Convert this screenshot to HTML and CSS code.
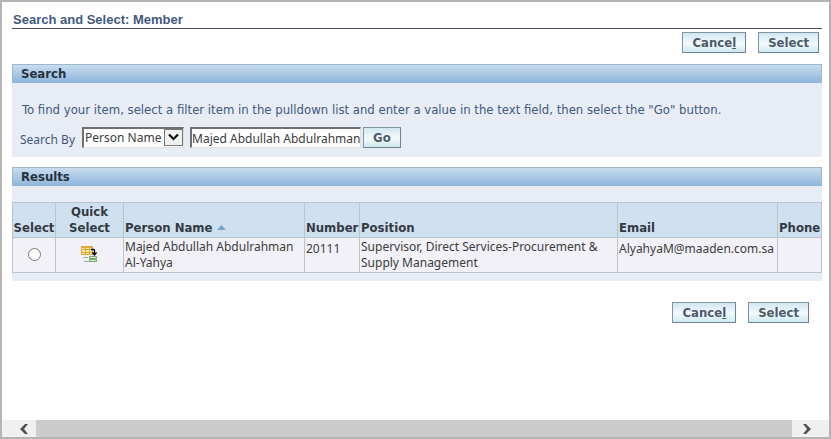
FILE: index.html
```html
<!DOCTYPE html>
<html lang="en">
<head>
<meta charset="utf-8">
<title>Search and Select: Member</title>
<link rel="stylesheet" href="styles.css">
</head>
<body>
<main class="content">
  <h1 class="page-title">Search and Select: Member</h1>
  <div class="actions">
    <button class="btn" type="button">Cance<u>l</u></button>
    <button class="btn" type="button">Select</button>
  </div>
  <section class="panel">
    <h2 class="panel-title">Search</h2>
    <form class="search">
      <p class="hint">To find your item, select a filter item in the pulldown list and enter a value in the text field, then select the "Go" button.</p>
      <div class="search-row">
        <label for="search-by">Search By</label>
        <div class="select-box">
          <select id="search-by"><option>Person Name</option></select>
          <svg class="select-arrow" viewBox="0 0 19 17" aria-hidden="true"><rect x=".5" y=".5" width="18" height="16" fill="#f0f0f0" stroke="#777"/><path d="M5 5.500l4.500 4.500 4.500-4.500" fill="none" stroke="#111" stroke-width="2.2"/></svg>
        </div>
        <input class="search-text" type="text" aria-label="Search text" value="Majed Abdullah Abdulrahman Al-Yahya">
        <button class="btn btn-go" type="button">Go</button>
      </div>
    </form>
  </section>
  <section class="panel results">
    <h2 class="panel-title">Results</h2>
    <table>
      <colgroup><col class="c-select"><col class="c-quick"><col class="c-name"><col class="c-number"><col class="c-position"><col class="c-email"><col class="c-phone"></colgroup>
      <thead>
        <tr>
          <th class="center">Select</th>
          <th class="center light">Quick Select</th>
          <th>Person Name <svg class="sort" viewBox="0 0 9 5" aria-hidden="true"><path d="M0 5L4.500 0 9 5z" fill="#7ba4c4"/></svg></th>
          <th>Number</th>
          <th>Position</th>
          <th>Email</th>
          <th>Phone</th>
        </tr>
      </thead>
      <tbody>
        <tr>
          <td class="center"><input class="radio" type="radio" name="member" aria-label="Select Majed Abdullah Abdulrahman Al-Yahya"></td>
          <td class="center"><button class="quick" type="button" aria-label="Quick Select"><svg viewBox="0 0 17 17" aria-hidden="true">
            <rect x="0" y="0" width="12" height="9" fill="#dfa93c"/>
            <path d="M1 2h3v1H1zM5 2h3v1H5zM9 2h2v1H9zM1 4h3v2H1zM5 4h3v2H5zM9 4h2v2H9zM1 7h3v1H1zM5 7h3v1H5zM9 7h2v1H9z" fill="#ffe9a0"/>
            <path d="M2 11.500h5M3 15.500h5" stroke="#9aaf96"/>
            <path d="M8.500 10.500h7v2h-7zM8.500 13.500h7v2h-7z" fill="#d8efd0" stroke="#78a36d"/>
            <path d="M10 3.500h2.500q1 0 1 1V7" fill="none" stroke="#000" stroke-width="1.300"/><path d="M10.500 6.500h6l-3 3.500z" fill="#000"/>
          </svg></button></td>
          <td>Majed Abdullah Abdulrahman <span class="nowrap">Al-Yahya</span></td>
          <td class="top">20111</td>
          <td>Supervisor, Direct Services-Procurement &amp; Supply Management</td>
          <td class="top">AlyahyaM@maaden.com.sa</td>
          <td></td>
        </tr>
      </tbody>
    </table>
  </section>
  <div class="actions actions-bottom">
    <button class="btn" type="button">Cance<u>l</u></button>
    <button class="btn" type="button">Select</button>
  </div>
</main>
<div class="scrollbar">
  <button class="scroll-btn" type="button" aria-label="Scroll left"><svg viewBox="0 0 10 12" aria-hidden="true"><path d="M6 1h3L5 6l4 5H6L1 6z" fill="#505050"/></svg></button>
  <div class="thumb"></div>
  <button class="scroll-btn" type="button" aria-label="Scroll right"><svg viewBox="0 0 10 12" aria-hidden="true"><path d="M4 1H1l4 5-4 5h3l5-5z" fill="#505050"/></svg></button>
</div>
</body>
</html>
```
FILE: styles.css
```css
* {
  box-sizing: border-box;
}

body {
  display: flex;
  flex-direction: column;
  min-height: 100vh;
  margin: 0;
  border: 2px solid #b4b4b4;
  background: #fff;
  color: #3c3c3c;
  font: 12px/16px "Noto Sans", sans-serif;
}

button,
input,
select {
  margin: 0;
  color: inherit;
  font: inherit;
}

.content {
  flex: 1;
  padding: 10px 7px 0 10px;
}

.page-title {
  margin: 0;
  padding-left: 1px;
  border-bottom: 1px solid #4a4a6c;
  color: #425a80;
  font: bold 13px/16px "Liberation Sans", Arial, sans-serif;
}

.actions {
  display: flex;
  justify-content: flex-end;
  gap: 12px;
  padding: 3px 3px 11px 0;
}

.actions-bottom {
  padding: 11px 13px 11px 0;
}

.hint,
.btn,
.panel-title,
th {
  font-family: "DejaVu Sans Condensed", "DejaVu Sans", sans-serif;
  font-size: 13px;
}

.btn {
  height: 21px;
  padding: 0 9px;
  border: 1px solid #8295a3;
  border-right-color: #6f8291;
  border-bottom-color: #6f8291;
  background: linear-gradient(#d2e6f0, #f2fafc 55%, #cde9ef);
  color: #4d5a6b;
  font-weight: bold;
  line-height: 18px;
}

.panel {
  margin-bottom: 10px;
  background: #e8edf5;
}

.panel-title {
  margin: 0;
  padding: 0 8px;
  border: 1px solid #9bb7cf;
  border-bottom: 0;
  background: linear-gradient(#c8dcee, #8db5dc);
  color: #26323f;
  line-height: 18px;
}

.search {
  padding: 19px 8px 9px;
  color: #40587e;
}

.hint {
  margin: 0 0 9px;
  padding-left: 2px;
}

.search-row {
  display: flex;
  align-items: center;
}

.search-row label {
  padding-top: 4px;
  margin-right: 7px;
}

.select-box {
  position: relative;
  margin-right: 6px;
}

.select-box select,
.search-text {
  height: 21px;
  padding: 0;
  border: 2px solid #707070;
  border-right: 1px solid #e0e0e0;
  border-bottom: 1px solid #e0e0e0;
  border-radius: 0;
  background: #fff;
  color: #3c3c3c;
}

.select-box select {
  display: block;
  width: 102px;
  padding: 0 1px;
  appearance: none;
}

.select-arrow {
  position: absolute;
  top: 2px;
  right: 1px;
  width: 19px;
  height: 17px;
  pointer-events: none;
}

.search-text {
  width: 171px;
  margin-right: 2px;
}

.results {
  padding-bottom: 8px;
}

table {
  width: 100%;
  margin-top: 16px;
  border-collapse: collapse;
  table-layout: fixed;
}

.c-select { width: 43px; }
.c-quick { width: 68px; }
.c-name { width: 181px; }
.c-number { width: 55px; }
.c-email { width: 160px; }
.c-phone { width: 44px; }

th,
td {
  padding: 1px;
  border: 1px solid #bcc3cb;
  text-align: left;
}

th {
  border-left-color: #8d9dac;
  background: #cfe0f0;
  color: #333a42;
  vertical-align: bottom;
}

th.light,
th:first-child {
  border-left-color: #b3c7d8;
}

td {
  height: 35px;
  background: #f1f1f7;
  vertical-align: middle;
}

th.center,
td.center {
  text-align: center;
}

th:first-child {
  padding: 1px 0;
}

th.light {
  padding: 1px 8px;
}

td.center {
  padding-bottom: 3px;
}

td.top {
  padding-top: 3px;
  vertical-align: top;
}

.nowrap {
  white-space: nowrap;
}

.sort {
  width: 9px;
  height: 5px;
  vertical-align: 2px;
}

.radio {
  width: 13px;
  height: 13px;
  vertical-align: middle;
}

.quick {
  padding: 0;
  border: 0;
  background: none;
  vertical-align: middle;
}

.quick svg {
  display: block;
  width: 17px;
  height: 17px;
}

.scrollbar {
  display: flex;
  height: 17px;
  background: #f0f0f0;
}

.scroll-btn {
  display: flex;
  align-items: center;
  justify-content: center;
  width: 34px;
  padding: 0 0 0 10px;
  border: 0;
  background: none;
}

.scroll-btn:last-child {
  width: 37px;
  padding: 0 7px 0 0;
}

.scroll-btn svg {
  width: 10px;
  height: 12px;
}

.thumb {
  flex: 1;
  background: #cbcbcb;
}
```
